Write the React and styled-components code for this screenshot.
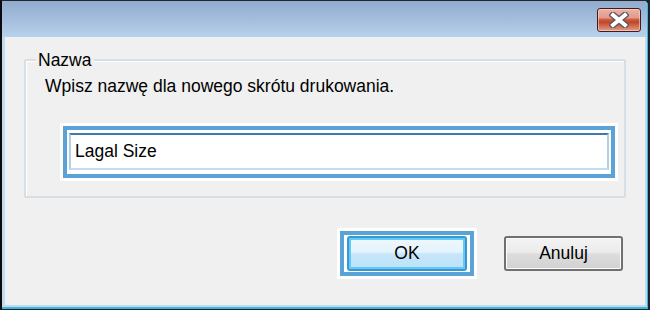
import React from "react";
import styled, { createGlobalStyle } from "styled-components";

const Global = createGlobalStyle`
  html, body { margin: 0; padding: 0; background: #0d0d0d; }
  #root { width: 650px; height: 310px; }
  * { box-sizing: border-box; }
`;

const Window = styled.div`
  width: 650px;
  height: 310px;
  display: flex;
  flex-direction: column;
  background: #0d0d0d;
  border-left: 2px solid #0b0b0b;
  border-top: 1px solid #262626;
  border-right: 2px solid #17232d;
  border-bottom: 1px solid #17232d;
  font-family: "Liberation Sans", Arial, sans-serif;
  font-size: 17.5px;
  color: #000;
`;

const Frame = styled.div`
  flex: 1;
  display: flex;
  flex-direction: column;
  background: #c2d9ee;
  border-right: 1px solid #3fb4dc;
  border-bottom: 2px solid #3fb4dc;
  border-top-right-radius: 4px;
`;

const TitleBar = styled.div`
  height: 36px;
  flex: none;
  display: flex;
  justify-content: flex-end;
  align-items: flex-start;
  padding: 7px 6px 0 0;
  background: linear-gradient(to bottom, #92accf 0%, #a3bddc 50%, #b8d1eb 100%);
  border-top-right-radius: 4px;
`;

const CloseButton = styled.div`
  width: 44px;
  height: 24px;
  border: 1px solid #431b1c;
  border-radius: 3px;
  display: flex;
  align-items: center;
  justify-content: center;
  background: linear-gradient(
    to bottom,
    #ebb3a6 0%,
    #e19a8a 40%,
    #cf5c3f 48%,
    #c3452a 60%,
    #cf6d51 78%,
    #e4a08b 100%
  );
  box-shadow: inset 0 0 0 1px rgba(255, 220, 210, 0.55);
`;

const Client = styled.div`
  flex: 1;
  margin: 0 2px 2px 3px;
  background: #f0f0f0;
  display: flex;
  flex-direction: column;
  padding: 13px 19px 0 19px;
`;

const GroupBox = styled.fieldset`
  margin: 0;
  padding: 0 9px 18px 10px;
  border: 2px solid #d5dfe5;
  box-shadow: inset 1px 1px 0 #ffffff;
  border-radius: 2px;
  display: flex;
  flex-direction: column;
  min-width: 0;
`;

const Legend = styled.legend`
  margin-left: 0;
  padding: 0 2px;
  background: #f0f0f0;
  line-height: 20px;
`;

const Description = styled.div`
  margin: 6px 0 0 9px;
  line-height: 20px;
`;

const Highlight = styled.div`
  display: flex;
  background: #ffffff;
  border: 4px solid #5aa3d6;
  box-shadow: 0 0 0 3px #ffffff;
  padding: ${(p) => p.$pad};
  margin-top: ${(p) => p.$top || "0"};
  margin-left: ${(p) => p.$left || "0"};
`;

const TextField = styled.div`
  flex: 1;
  height: 37px;
  display: flex;
  align-items: center;
  padding-left: 4px;
  background: #ffffff;
  border-style: solid;
  border-width: 2px;
  border-color: #3d7bad #b3cfe8 #c3ddf1 #b3cfe8;
`;

const ButtonRow = styled.div`
  display: flex;
  justify-content: flex-end;
  align-items: center;
  gap: 30px;
  margin-top: 33px;
  padding-right: 3px;
`;

const Button = styled.div`
  width: ${(p) => p.$w};
  height: 35px;
  display: flex;
  align-items: center;
  justify-content: center;
  border-radius: 3px;
  border: 2px solid ${(p) => (p.$primary ? "#3c96d4" : "#707070")};
  background: ${(p) =>
    p.$primary
      ? "linear-gradient(to bottom, #eef7fd 0%, #e4f3fc 45%, #c6e6f9 52%, #bde2f8 100%)"
      : "linear-gradient(to bottom, #f3f3f3 0%, #ececec 45%, #dddddd 52%, #d1d1d1 100%)"};
  box-shadow: ${(p) =>
    p.$primary ? "inset 0 0 0 2px #5fcdf3" : "inset 0 0 0 1px #fcfcfc"};
  color: #000;
`;

function CloseGlyph() {
  return (
    <svg width="20" height="16" viewBox="0 0 20 16">
      <path
        d="M4 3 L16 13 M16 3 L4 13"
        stroke="#5a5560"
        strokeWidth="6.5"
        strokeLinecap="square"
        fill="none"
      />
      <path
        d="M4 3 L16 13 M16 3 L4 13"
        stroke="#ffffff"
        strokeWidth="4"
        strokeLinecap="square"
        fill="none"
      />
    </svg>
  );
}

export default function App() {
  return (
    <>
      <Global />
      <Window>
        <Frame>
          <TitleBar>
            <CloseButton>
              <CloseGlyph />
            </CloseButton>
          </TitleBar>
          <Client>
            <GroupBox>
              <Legend>Nazwa</Legend>
              <Description>Wpisz nazwę dla nowego skrótu drukowania.</Description>
              <Highlight $pad="3px 2px 4px" $top="30px" $left="27px">
                <TextField>Lagal Size</TextField>
              </Highlight>
            </GroupBox>
            <ButtonRow>
              <Highlight $pad="1px 3px">
                <Button $primary $w="120px">OK</Button>
              </Highlight>
              <Button $w="119px">Anuluj</Button>
            </ButtonRow>
          </Client>
        </Frame>
      </Window>
    </>
  );
}
